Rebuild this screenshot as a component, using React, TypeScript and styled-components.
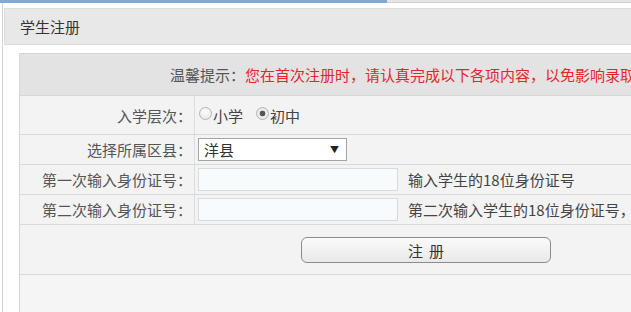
import React from "react";
import styled, { createGlobalStyle } from "styled-components";

const GlobalStyle = createGlobalStyle`
  html, body { margin: 0; padding: 0; background: #ffffff; overflow: hidden; }
  body {
    font-family: "Noto Sans CJK SC", "Noto Sans", "DejaVu Sans", sans-serif;
    font-size: 15px;
    color: #444;
  }
`;

const TopStrip = styled.div`
  display: flex;
  height: 3px;
`;

const ActiveTab = styled.div`
  width: 387px;
  background: #7ea9d8;
`;

const RestTab = styled.div`
  flex: 1;
  background: #e6e6e6;
  border-bottom: 1px solid #cfcfcf;
`;

const Frame = styled.div`
  margin-left: 2px;
  padding-top: 5px;
  border-left: 1px solid #d2d2d2;
  height: 309px;
  box-sizing: border-box;
`;

const Header = styled.div`
  margin-left: 1px;
  height: 37px;
  box-sizing: border-box;
  display: flex;
  align-items: center;
  padding-left: 15px;
  background: #e8e8e8;
  border: 1px solid #dcdcdc;
  border-right: none;
  color: #333;
  font-size: 15px;
`;

const Body = styled.div`
  padding: 8px 0 0 16px;
`;

const Table = styled.div`
  width: 760px;
  border-left: 1px solid #d6d6d6;
  border-top: 1px solid #d6d6d6;
  background: #f3f3f3;
`;

const TipRow = styled.div`
  height: 42px;
  box-sizing: border-box;
  display: flex;
  align-items: center;
  padding-left: 150px;
  background: #e3e3e3;
  border-bottom: 1px solid #d6d6d6;
  white-space: nowrap;
  color: #555;
`;

const Warn = styled.span`
  color: #e3262c;
`;

const Row = styled.div<{ $h: number }>`
  display: grid;
  grid-template-columns: 175px 1fr;
  height: ${(p) => p.$h}px;
  box-sizing: border-box;
  border-bottom: 1px solid #d9d9d9;
`;

const Label = styled.div`
  display: flex;
  align-items: center;
  justify-content: flex-end;
  padding-right: 2px;
  border-right: 1px solid #dddddd;
  white-space: nowrap;
  color: #555;
`;

const Value = styled.div`
  display: flex;
  align-items: center;
  padding-left: 3px;
  white-space: nowrap;
  color: #444;
`;

const RadioLabel = styled.label`
  display: inline-flex;
  align-items: center;
  margin-right: 12px;
  color: #444;
`;

const Radio = styled.input`
  appearance: none;
  margin: 0 1px 0 1px;
  width: 13px;
  height: 13px;
  border-radius: 50%;
  border: 1px solid #b5b5b5;
  background: radial-gradient(circle at 50% 35%, #fdfdfd 0%, #e4e4e4 100%);
  box-sizing: border-box;
  position: relative;
  top: -2px;
  &:checked {
    background: radial-gradient(circle, #555 0 2.6px, #f0f0f0 3.2px, #dcdcdc 100%);
  }
`;

const SelectBox = styled.div`
  width: 149px;
  height: 23px;
  box-sizing: border-box;
  display: flex;
  align-items: center;
  justify-content: space-between;
  padding: 0 7px 0 5px;
  background: #fff;
  border: 1px solid #a5a5a5;
  color: #333;
`;

const Arrow = styled.span`
  font-size: 9px;
  color: #222;
`;

const IdInput = styled.input`
  width: 200px;
  height: 23px;
  box-sizing: border-box;
  margin: 0 10px 0 0;
  border: 1px solid #dadada;
  background: #f7fbfd;
  font: inherit;
`;

const Hint = styled.span`
  color: #444;
`;

const ButtonRow = styled.div`
  height: 50px;
  box-sizing: border-box;
  display: flex;
  align-items: center;
  padding-left: 281px;
  border-bottom: 1px solid #d9d9d9;
`;

const Submit = styled.button`
  width: 250px;
  height: 26px;
  border: 1px solid #8c8c8c;
  border-radius: 6px;
  background: linear-gradient(#fafafa, #e9e9e9);
  font-family: inherit;
  font-size: 15px;
  color: #333;
  letter-spacing: 6px;
  padding: 0 0 0 6px;
  margin-top: 1px;
`;

const Filler = styled.div`
  height: 60px;
  background: #f5f5f5;
`;

export default function App() {
  return (
    <>
      <GlobalStyle />
      <TopStrip>
        <ActiveTab />
        <RestTab />
      </TopStrip>
      <Frame>
        <Header>学生注册</Header>
        <Body>
          <Table>
            <TipRow>
              温馨提示：<Warn>您在首次注册时，请认真完成以下各项内容，以免影响录取</Warn>
            </TipRow>
            <Row $h={39}>
              <Label>入学层次：</Label>
              <Value>
                <RadioLabel>
                  <Radio type="radio" name="level" />小学
                </RadioLabel>
                <RadioLabel>
                  <Radio type="radio" name="level" defaultChecked />初中
                </RadioLabel>
              </Value>
            </Row>
            <Row $h={30}>
              <Label>选择所属区县：</Label>
              <Value>
                <SelectBox role="combobox">
                  <span>洋县</span>
                  <Arrow>▼</Arrow>
                </SelectBox>
              </Value>
            </Row>
            <Row $h={30}>
              <Label>第一次输入身份证号：</Label>
              <Value>
                <IdInput type="text" />
                <Hint>输入学生的18位身份证号</Hint>
              </Value>
            </Row>
            <Row $h={30}>
              <Label>第二次输入身份证号：</Label>
              <Value>
                <IdInput type="text" />
                <Hint>第二次输入学生的18位身份证号，</Hint>
              </Value>
            </Row>
            <ButtonRow>
              <Submit type="button">注册</Submit>
            </ButtonRow>
            <Filler />
          </Table>
        </Body>
      </Frame>
    </>
  );
}
